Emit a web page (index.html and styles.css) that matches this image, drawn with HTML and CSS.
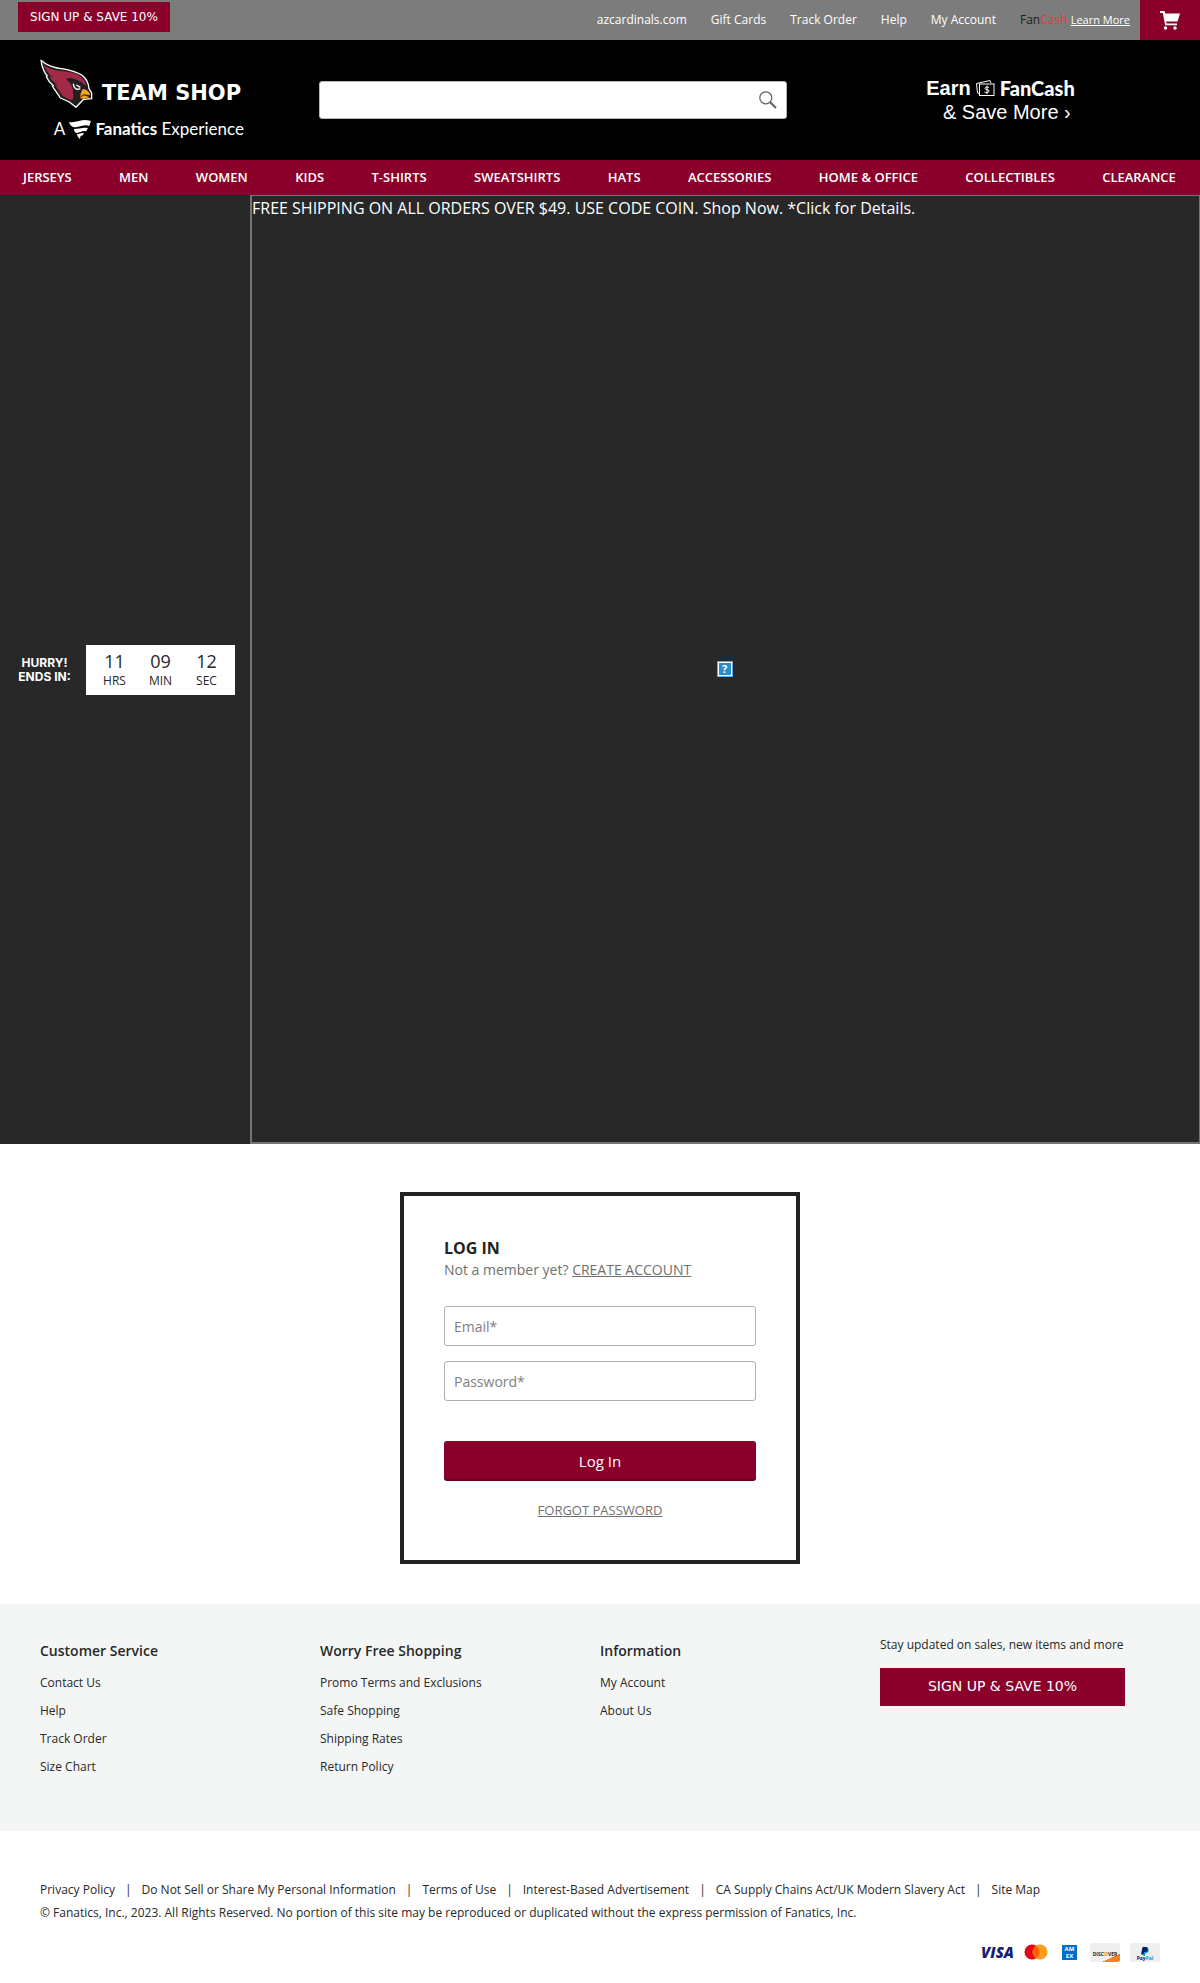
FILE: index.html
```html
<!DOCTYPE html>
<html lang="en">
<head>
<meta charset="utf-8">
<meta name="viewport" content="width=device-width, initial-scale=1">
<title>Log In | Cardinals Team Shop</title>
<link rel="stylesheet" href="styles.css">
</head>
<body>
<div class="topbar">
  <button class="signup signup-small" type="button">SIGN UP &amp; SAVE 10%</button>
  <nav class="toplinks" aria-label="Account">
    <a href="#">azcardinals.com</a>
    <a href="#">Gift Cards</a>
    <a href="#">Track Order</a>
    <a href="#">Help</a>
    <a href="#">My Account</a>
    <span class="fancash"><span class="fan">Fan</span><span class="cash">Cash</span> <a class="learn" href="#">Learn More</a></span>
  </nav>
  <a class="cart" href="#" aria-label="Cart">
    <svg width="20" height="20" viewBox="0 0 20 20" fill="#fff"><path d="M0 1h4.500l.8 2.500H20l-2.500 8H6l.6 2H17v1.800H5.200L2.800 3H0z"/><circle cx="5.500" cy="18" r="1.700"/><circle cx="15" cy="18" r="1.700"/></svg>
  </a>
</div>

<header class="header">
  <a class="logo" href="#">
    <span class="logo-top">
      <svg class="bird" width="53" height="50" viewBox="30 28 159 150">
        <path fill="#231f20" stroke="#fff" stroke-width="4" stroke-linejoin="round" d="M33 32C46 43 62 52 82 55C108 59 136 62 156 77C170 88 176 102 177 117L185 130V147L161 149L138 173L118 157L91 145C82 130 72 119 67 109L70 108C59 99 53 90 49 81L52 79C40 66 36 52 33 32Z"/>
        <path fill="#a32a46" d="M42 46C56 57 72 62 91 64C118 66 141 70 154 83C164 92 168 102 169 110C155 96 140 87 119 85C104 84 110 91 118 98C126 108 129 116 129 128C131 141 131 148 126 151C116 148 103 142 97 138C90 125 80 114 75 105L84 108C70 97 61 88 58 80L69 84C56 73 46 60 42 46Z"/>
        <path fill="none" stroke="#fff" stroke-width="4" d="M130 102C131 115 138 122 151 117M139 106L151 113"/>
        <path fill="#f9a51a" d="M158 118C170 119 178 126 181 137L161 134L150 142L153 129ZM149 145L162 137L179 143L159 147Z"/>
      </svg>
      <span class="teamshop">TEAM SHOP</span>
    </span>
    <span class="logo-bottom">
      <span>A</span>
      <svg width="22" height="19" viewBox="0 0 22 19" fill="#fff"><path d="M0 2C6 3 12 0 16 0C19 0 21 1 22 1C21 3 21 5 20 6C17 4 12 6 8 7C4 8 1 6 0 2ZM5 9C10 9 14 7 19 8L17 11.500C14 10 11 13 8 13C6 13 5 11 5 9ZM8 14C11 14 12 12.500 15 13L13.500 15.500C11 15 11.500 17 11 19C9 17 8 16 8 14Z"/></svg>
      <span><b>Fanatics</b> Experience</span>
    </span>
  </a>
  <form class="search" role="search">
    <input type="search" aria-label="Search">
    <button type="submit" aria-label="Search">
      <svg width="18" height="18" viewBox="0 0 18 18" fill="none" stroke="#666"><circle cx="6.800" cy="6.800" r="6" stroke-width="1.300"/><path stroke-width="2.200" d="M11 11L17 17"/></svg>
    </button>
  </form>
  <a class="earn" href="#">
    <span class="earn-top"><b>Earn</b>
      <svg width="19" height="16" viewBox="0 0 19 16" fill="none" stroke="#fff"><path d="M3.500 13.500L1.500 13L.5 3.500L14 .5L15 3"/><rect x="3.500" y="4" width="14.500" height="11.500"/><path d="M13 7.500C11 6.500 9 7 9 8.500C9 10 13 9 13 11C13 13 10 13 8.500 12M11 5.500V14"/></svg>
      <b class="earn-brand">FanCash</b></span>
    <span class="earn-bottom">&amp; Save More ›</span>
  </a>
</header>

<nav class="mainnav" aria-label="Shop">
  <a href="#">JERSEYS</a>
  <a href="#">MEN</a>
  <a href="#">WOMEN</a>
  <a href="#">KIDS</a>
  <a href="#">T-SHIRTS</a>
  <a href="#">SWEATSHIRTS</a>
  <a href="#">HATS</a>
  <a href="#">ACCESSORIES</a>
  <a href="#">HOME &amp; OFFICE</a>
  <a href="#">COLLECTIBLES</a>
  <a href="#">CLEARANCE</a>
</nav>

<section class="promo">
  <div class="countdown">
    <p class="hurry">HURRY!<br>ENDS IN:</p>
    <div class="timer">
      <div class="unit"><span class="num">11</span><span>HRS</span></div>
      <div class="unit"><span class="num">09</span><span>MIN</span></div>
      <div class="unit"><span class="num">12</span><span>SEC</span></div>
    </div>
  </div>
  <a class="banner" href="#">
    <span>FREE SHIPPING ON ALL ORDERS OVER $49. USE CODE COIN. Shop Now. *Click for Details.</span>
    <span class="missing">?</span>
  </a>
</section>

<main>
  <form class="login">
    <h1>LOG IN</h1>
    <p class="member">Not a member yet? <a href="#">CREATE ACCOUNT</a></p>
    <input class="field" type="email" placeholder="Email*" aria-label="Email">
    <input class="field" type="password" placeholder="Password*" aria-label="Password">
    <button class="submit" type="submit">Log In</button>
    <a class="forgot" href="#">FORGOT PASSWORD</a>
  </form>
</main>

<footer>
  <div class="columns">
    <section>
      <h2>Customer Service</h2>
      <ul>
        <li><a href="#">Contact Us</a></li>
        <li><a href="#">Help</a></li>
        <li><a href="#">Track Order</a></li>
        <li><a href="#">Size Chart</a></li>
      </ul>
    </section>
    <section>
      <h2>Worry Free Shopping</h2>
      <ul>
        <li><a href="#">Promo Terms and Exclusions</a></li>
        <li><a href="#">Safe Shopping</a></li>
        <li><a href="#">Shipping Rates</a></li>
        <li><a href="#">Return Policy</a></li>
      </ul>
    </section>
    <section>
      <h2>Information</h2>
      <ul>
        <li><a href="#">My Account</a></li>
        <li><a href="#">About Us</a></li>
      </ul>
    </section>
    <section class="updates">
      <p>Stay updated on sales, new items and more</p>
      <button class="signup signup-large" type="button">SIGN UP &amp; SAVE 10%</button>
    </section>
  </div>
  <div class="legal">
    <ul class="legal-links">
      <li><a href="#">Privacy Policy</a></li>
      <li><a href="#">Do Not Sell or Share My Personal Information</a></li>
      <li><a href="#">Terms of Use</a></li>
      <li><a href="#">Interest-Based Advertisement</a></li>
      <li><a href="#">CA Supply Chains Act/UK Modern Slavery Act</a></li>
      <li><a href="#">Site Map</a></li>
    </ul>
    <p>© Fanatics, Inc., 2023. All Rights Reserved. No portion of this site may be reproduced or duplicated without the express permission of Fanatics, Inc.</p>
    <div class="payments">
      <span class="visa">VISA</span>
      <svg width="24" height="16" viewBox="0 0 24 16" aria-label="Mastercard"><circle cx="8" cy="8" r="7.500" fill="#eb001b"/><circle cx="16" cy="8" r="7.500" fill="#f79e1b"/><path fill="#ff5f00" d="M12 1.700A7.500 7.500 0 0 1 12 14.300A7.500 7.500 0 0 1 12 1.700"/></svg>
      <span class="amex">AM<br>EX</span>
      <span class="card discover">DISC<i>O</i>VER</span>
      <span class="card paypal">
        <svg width="8" height="9" viewBox="0 0 8 9"><path fill="#009cde" d="M3 2h4.500C8 5 7 6 4.500 6L4 9H2z"/><path fill="#012169" d="M1.500 0H5C7 0 7.500 2 6.500 3.500C6 4.500 5 5 3 5L2.500 7.500H0z"/></svg>
        <span>Pay<i>Pal</i></span>
      </span>
    </div>
  </div>
</footer>
</body>
</html>
```
FILE: styles.css
```css
* { box-sizing: border-box; }

body {
  margin: 0;
  background: #fff;
  color: #282828;
  font-family: "Open Sans", sans-serif;
  font-size: 12px;
  line-height: 20px;
}

h1, h2, p, ul { margin: 0; padding: 0; }
ul { list-style: none; }
a { color: inherit; text-decoration: none; }
button, input { font: inherit; }
svg { display: block; flex: none; }

.topbar {
  display: flex;
  align-items: stretch;
  height: 40px;
  padding-left: 18px;
  background: #7c7c7c;
  color: #fff;
}

.signup {
  padding: 0 0 1px;
  border: 0;
  background: #8b002b;
  color: #fff;
  font-family: "DejaVu Sans", sans-serif;
}
.signup-small { width: 152px; height: 30px; margin-top: 2px; font-size: 12px; }
.signup-large { width: 245px; height: 38px; padding-bottom: 2px; font-size: 14px; }

.toplinks {
  display: flex;
  align-items: center;
  gap: 24px;
  margin-left: auto;
  padding-right: 10px;
}
.fan { color: #222; }
.cash { color: #e53935; }
.learn { font-size: 11px; text-decoration: underline; }

.cart {
  display: flex;
  align-items: center;
  justify-content: center;
  width: 60px;
  background: #8b002b;
}

.header {
  display: grid;
  grid-template-columns: 279fr 468fr 413fr;
  align-items: center;
  height: 120px;
  padding-left: 40px;
  background: #000;
  color: #fff;
}

.logo { display: block; width: 206px; }
.logo-top { display: flex; align-items: center; gap: 9px; }
.teamshop {
  padding-top: 18px;
  font-family: "DejaVu Sans", sans-serif;
  font-size: 21px;
  font-weight: 700;
  white-space: nowrap;
}
.logo-bottom {
  display: flex;
  align-items: center;
  justify-content: flex-end;
  gap: 4px;
  padding-top: 8px;
  padding-right: 2px;
  font-family: Lato, sans-serif;
  font-size: 17px;
  line-height: 24px;
  white-space: nowrap;
}

.search {
  display: flex;
  height: 38px;
  border: 1px solid #b5b5b5;
  border-radius: 3px;
  background: #fff;
}
.search input {
  flex: 1;
  min-width: 0;
  padding: 0 12px;
  border: 0;
  background: transparent;
}
.search button {
  padding: 0 9px;
  border: 0;
  background: transparent;
}

.earn {
  justify-self: center;
  padding-left: 14px;
  font-family: "Liberation Sans", sans-serif;
  font-size: 20px;
  line-height: 24px;
  text-align: right;
}
.earn-top { display: flex; align-items: center; gap: 5px; }
.earn-brand { font-family: Lato, sans-serif; font-weight: 900; }
.earn-bottom { display: block; padding-right: 4px; }

.mainnav {
  display: flex;
  align-items: center;
  justify-content: space-between;
  height: 35px;
  padding: 0 24px 2px 23px;
  background: #8b002b;
  color: #fff;
  font-size: 13px;
  font-weight: 600;
}

.promo { display: flex; background: #282828; color: #fff; }
.countdown {
  display: flex;
  align-items: center;
  gap: 15px;
  width: 250px;
  padding-left: 18px;
}
.hurry {
  width: 53px;
  font-family: Inter, sans-serif;
  font-weight: 700;
  line-height: 14px;
  text-align: center;
  white-space: nowrap;
}
.timer {
  display: flex;
  justify-content: center;
  width: 149px;
  height: 50px;
  padding: 7px 0;
  background: #fff;
  color: #282828;
}
.unit { display: flex; flex-direction: column; width: 46px; line-height: 20px; text-align: center; }
.num { font-size: 18px; line-height: 19px; }

.banner {
  position: relative;
  flex: 1;
  aspect-ratio: 950 / 949;
  border: 2px solid #747474;
  border-width: 1px 1px 2px 2px;
  font-size: 16px;
  line-height: 24px;
}
.banner > span { display: block; }
.banner .missing {
  position: absolute;
  top: 50%;
  left: 50%;
  width: 16px;
  height: 16px;
  margin: -8px -9px;
  border: 2px solid #fff;
  outline: 1px solid #6fa5d5;
  outline-offset: -1px;
  background: #2a8cc8;
  font-size: 11px;
  font-weight: 700;
  line-height: 12px;
  text-align: center;
}

.login {
  display: flex;
  flex-direction: column;
  width: 400px;
  margin: 48px auto 40px;
  padding: 40px;
  border: 4px solid #222;
}
.login h1 { font-size: 16px; font-weight: 700; line-height: 24px; color: #222; }
.member { margin-bottom: 26px; color: #707070; font-size: 14px; line-height: 20px; }
.member a, .forgot { color: #707070; text-decoration: underline; }
.field {
  width: 100%;
  height: 40px;
  margin-bottom: 15px;
  padding: 0 9px;
  border: 1px solid #b0b0b0;
  border-radius: 3px;
  color: #282828;
  font-size: 14px;
}
.field::placeholder { color: #808080; opacity: 1; }
.submit {
  height: 40px;
  margin: 25px 0 19px;
  padding: 2px 0 0;
  border: 0;
  border-bottom: 2px solid #65001f;
  border-radius: 3px;
  background: #8b002b;
  color: #fff;
  font-size: 15px;
}
.forgot { align-self: center; font-size: 13px; }

.columns {
  display: grid;
  grid-template-columns: repeat(4, 1fr);
  min-height: 227px;
  padding: 31px 40px;
  background: #f3f6f5;
}
.columns section { padding-top: 6px; }
.columns h2 { margin-bottom: 8px; font-size: 14px; font-weight: 600; }
.columns li { line-height: 28px; }
.columns .updates { padding-top: 0; }
.updates p { margin-bottom: 13px; line-height: 20px; }

.legal { padding: 47px 40px 16px; line-height: 23px; }
.legal-links { display: flex; flex-wrap: wrap; }
.legal-links li + li::before { content: "|"; padding: 0 10px; }

.payments {
  display: flex;
  align-items: center;
  justify-content: flex-end;
  height: 30px;
  margin-top: 13px;
}
.visa {
  margin-right: 10px;
  color: #1a1f71;
  font-size: 15px;
  font-style: italic;
  font-weight: 800;
}
.amex {
  width: 15px;
  height: 15px;
  margin: 0 13px 0 14px;
  padding-top: 1px;
  background: #016fd0;
  color: #fff;
  font-size: 6px;
  font-weight: 700;
  line-height: 7px;
  text-align: center;
}
.card {
  width: 30px;
  height: 19px;
  border-radius: 2px;
  background: #efefef;
  font-size: 5px;
  font-weight: 700;
  text-align: center;
}
.card i { font-style: normal; }
.discover {
  margin-right: 10px;
  background: linear-gradient(155deg, #efefef 74%, #f58220 75%);
}
.discover i { color: #f58220; }
.paypal {
  display: flex;
  flex-direction: column;
  align-items: center;
  padding-top: 4px;
  color: #012169;
  line-height: 5px;
}
.paypal i { color: #009cde; }
```
